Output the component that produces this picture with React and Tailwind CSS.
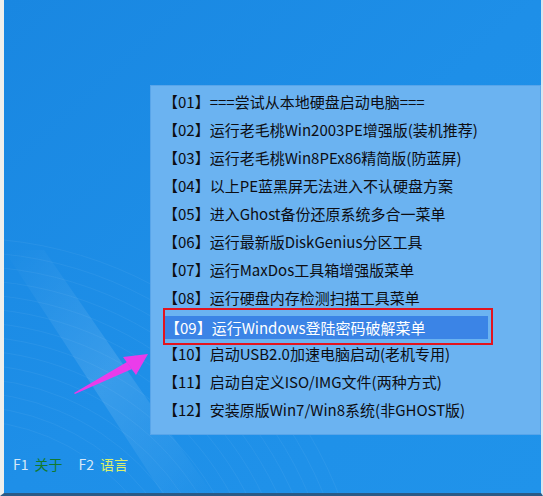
const ITEMS = [
  '【01】===尝试从本地硬盘启动电脑===',
  '【02】运行老毛桃Win2003PE增强版(装机推荐)',
  '【03】运行老毛桃Win8PEx86精简版(防蓝屏)',
  '【04】以上PE蓝黑屏无法进入不认硬盘方案',
  '【05】进入Ghost备份还原系统多合一菜单',
  '【06】运行最新版DiskGenius分区工具',
  '【07】运行MaxDos工具箱增强版菜单',
  '【08】运行硬盘内存检测扫描工具菜单',
  '【09】运行Windows登陆密码破解菜单',
  '【10】启动USB2.0加速电脑启动(老机专用)',
  '【11】启动自定义ISO/IMG文件(两种方式)',
  '【12】安装原版Win7/Win8系统(非GHOST版)',
];

const SELECTED = 8;

function Waves() {
  // faint concentric arcs in the wallpaper
  const rings = [];
  for (let i = 0; i < 14; i++) rings.push(220 + i * 14);
  return (
    <svg className="absolute inset-0 pointer-events-none" width="543" height="496">
      <defs>
        <linearGradient id="band" x1="0" y1="0" x2="1" y2="1">
          <stop offset="0" stopColor="#ffffff" stopOpacity="0" />
          <stop offset="0.5" stopColor="#ffffff" stopOpacity="0.12" />
          <stop offset="1" stopColor="#ffffff" stopOpacity="0" />
        </linearGradient>
      </defs>
      {rings.map((r) => (
        <circle key={r} cx="-40" cy="640" r={r} fill="none" stroke="#ffffff" strokeOpacity="0.05" strokeWidth="1" />
      ))}
      <polygon points="0,250 40,250 210,496 160,496" fill="url(#band)" />
    </svg>
  );
}

function Arrow() {
  return (
    <svg className="absolute inset-0 pointer-events-none" width="543" height="496">
      <polygon points="70,393 123,362 128,369 71,394" fill="#ea3cea" />
      <polygon points="144,354 119,357 132,375" fill="#ea3cea" />
    </svg>
  );
}

export default function App() {
  return (
    <div
      className="relative w-[543px] h-[496px] overflow-hidden flex flex-col border-l-[4px] border-r-[2px] border-b-[3px] border-l-[#efefec] border-r-[#d9e6f0] border-b-[#2a5a86] bg-gradient-to-br from-[#1987e1] via-[#1e8fe8] to-[#2093ea]"
      style={{ fontFamily: '"Noto Sans CJK SC", "Noto Sans", sans-serif' }}
    >
      <Waves />

      <div className="relative ml-[146px] mt-[85px] w-[391px] h-[350px] bg-[#6bb3f1] border border-[#58a5ea] pt-[2px]">
        {ITEMS.map((label, i) =>
          i === SELECTED ? (
            <div key={label} className="relative h-[28px] flex items-center">
              <div className="ml-[14px] w-[323px] h-[23px] mt-[2px] bg-[#3b84e6] text-white text-[15px] leading-[23px] whitespace-nowrap">
                {label}
              </div>
              <div className="absolute -top-[4px] left-[12px] w-[330px] h-[37px] border-2 border-[#e3141e]" />
            </div>
          ) : (
            <div key={label} className="h-[28px] pl-[12px] flex items-center text-[15px] text-[#0d0d12] whitespace-nowrap">
              {label}
            </div>
          )
        )}
      </div>

      <div className="relative mt-[20px] pl-[9px] flex items-center text-[14px] leading-[18px]">
        <span className="text-[#d6e8f7]">F1</span>
        <span className="ml-[6px] text-[#127a2e]">关于</span>
        <span className="ml-[16px] text-[#d6e8f7]">F2</span>
        <span className="ml-[6px] text-[#dcf06a]">语言</span>
      </div>

      <Arrow />
    </div>
  );
}
